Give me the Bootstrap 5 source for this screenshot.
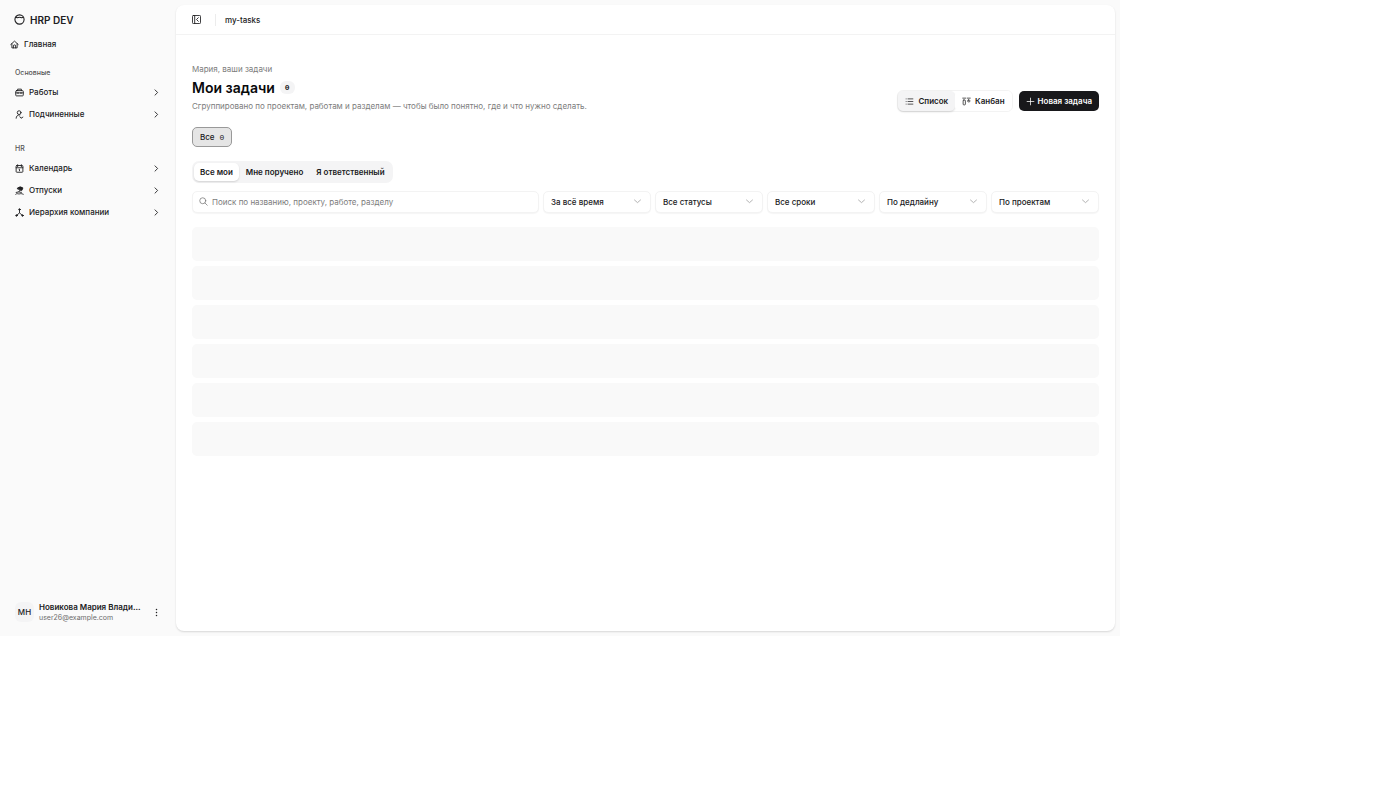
<!DOCTYPE html>
<html lang="ru">
<head>
<meta charset="utf-8">
<meta name="viewport" content="width=device-width, initial-scale=1">
<title>Мои задачи</title>
<link href="https://cdn.jsdelivr.net/npm/bootstrap@5.3.0/dist/css/bootstrap.min.css" rel="stylesheet">
<style>
:root{--ink:#202022;--muted:#7c7c7c;--line:#f3f3f3;--soft:#f4f4f5;--shell:#fafafa}
body{font-family:Inter,"Liberation Sans",sans-serif;font-size:8px;line-height:12px;color:var(--ink);background:#fff}
svg{fill:none;stroke:currentColor;stroke-width:2;stroke-linecap:round;stroke-linejoin:round;flex:none;width:9px;height:9px}
a{color:inherit;text-decoration:none}
button{font:inherit;color:inherit;white-space:nowrap}
.shell{width:80%;height:80vh;background:var(--shell)}
.side{width:176px;padding:7px 8px 13px}
.side-brand{height:25px;padding:0 6px;gap:5px;font-size:10px;font-weight:600}
.side-brand svg{width:11px;height:11px;stroke-width:2.4}
.side-link{height:22px;gap:5px;padding:0 7px;background:none;border:0;width:100%;font-weight:500}
.side-link svg{stroke-width:2.4}
.side-link.home{padding:0 2px;height:24px}
.side-label{height:17px;margin-top:8px;padding:1px 7px 0;font-size:7px;color:#555;font-weight:500}
.side-link + .side-label.second{margin-top:15px}
.avatar{width:19px;height:20px;border-radius:6px;background:var(--soft)}
.user-name{font-weight:600;line-height:11px}
.user-mail{font-size:7px;line-height:10px;color:#6c6c6c;font-weight:400}
.panel{margin:5px 5px 5px 0;border-radius:8px;background:#fff;box-shadow:0 1px 2px rgba(0,0,0,.14);min-width:0}
.top-bar{height:30px;padding:0 16px;border-bottom:1px solid var(--line);font-weight:500}
.rule{width:1px;height:12px;background:#ececec;margin:0 9px 0 14px}
.content{padding:28px 16px 16px}
.muted{color:var(--muted)}
.title-row{height:25px;gap:5px}
.title{font-size:14px;line-height:20px;font-weight:600;margin:0;color:#09090b}
.count{font-family:"Liberation Mono",monospace;font-size:8px;line-height:13px}
.count-pill{background:var(--soft);border-radius:6px;padding:0 5px;font-weight:700}
.actions{gap:6px}
.seg{border:1px solid var(--line);border-radius:6px}
.seg button{height:20px;gap:4px;padding:0 7px;border:0;background:#fff;border-radius:5px;font-weight:600}
.seg button.on{background:var(--soft);box-shadow:0 1px 2px rgba(0,0,0,.15)}
.add{height:20px;padding:0 7px;gap:3px;border:0;border-radius:5px;background:var(--ink);background:#18181b;color:#fff;font-weight:600}
.chip{height:20px;padding:0 7px;gap:5px;border:1px solid #999;border-radius:5px;background:#e5e5e5;font-weight:500;margin-top:15px}
.tabs{background:var(--soft);border-radius:7px;padding:2px;margin-top:14px;gap:1px}
.tabs button{height:18px;border:0;background:none;border-radius:5px;padding:0 6px;font-weight:600}
.tabs button.on{background:#fff;box-shadow:0 1px 2px rgba(0,0,0,.14)}
.filters{display:grid;grid-template-columns:minmax(0,1fr) repeat(5,108px);gap:4px;margin-top:8px}
.field{height:22px;border:1px solid var(--line);border-radius:5px;background:#fff;box-shadow:0 1px 1px rgba(0,0,0,.04);position:relative}
.field input,.field select{display:block;width:100%;height:20px;border:0;background:none;outline:0;padding:0 7px;font:inherit;color:inherit;appearance:none;border-radius:5px}
.field select{font-weight:500}
.field input{padding-left:19px}
.field input::placeholder{color:var(--muted);opacity:1}
.field svg{position:absolute;top:5px;color:#777;pointer-events:none}
.field .lens{left:6px}
.field .chev{right:8px;color:#999}
.rows{gap:5px;margin-top:14px}
.bone{height:34px;border-radius:5px;background:#f9f9f9}
</style>
</head>
<body>
<div class="shell d-flex">
  <aside class="side d-flex flex-column flex-shrink-0">
    <a href="#" class="side-brand d-flex align-items-center"><svg viewBox="0 0 24 24"><circle cx="12" cy="12" r="10"/><path d="M4 7l3 1q5-2 10 0l3-1"/></svg>HRP DEV</a>
    <nav class="d-flex flex-column">
      <a href="#" class="side-link home d-flex align-items-center"><svg viewBox="0 0 24 24"><path d="M2 12l10-9 10 9M5 10v11h14V10M9 21v-5a3 3 0 0 1 6 0v5"/></svg>Главная</a>
      <div class="side-label d-flex align-items-center">Основные</div>
      <button class="side-link d-flex align-items-center"><svg viewBox="0 0 24 24"><rect x="2" y="7" width="20" height="14" rx="2"/><path d="M7 7V3h10v4M2 13h20M8 12v3M16 12v3"/></svg>Работы<svg class="ms-auto" viewBox="0 0 24 24"><path d="M8 5l7 7-7 7"/></svg></button>
      <button class="side-link d-flex align-items-center"><svg viewBox="0 0 24 24"><circle cx="11" cy="7" r="5"/><path d="M3 22c0-6 4-9 10-9M13 18l3 4 5-3"/></svg>Подчиненные<svg class="ms-auto" viewBox="0 0 24 24"><path d="M8 5l7 7-7 7"/></svg></button>
      <div class="side-label second d-flex align-items-center">HR</div>
      <button class="side-link d-flex align-items-center"><svg viewBox="0 0 24 24"><rect x="3" y="4" width="18" height="18" rx="2"/><path d="M7 2v5M17 2v5M3 10h18M11 14h1v4"/></svg>Календарь<svg class="ms-auto" viewBox="0 0 24 24"><path d="M8 5l7 7-7 7"/></svg></button>
      <button class="side-link d-flex align-items-center"><svg viewBox="0 0 24 24"><path d="M6 6q8-7 15-1-1 5-3 7z" fill="currentColor"/><path d="M14 8q-1 6-4 8M2 22c4-4 6 0 10-1s5-1 10 1M3 17q7-3 14 0"/></svg>Отпуски<svg class="ms-auto" viewBox="0 0 24 24"><path d="M8 5l7 7-7 7"/></svg></button>
      <button class="side-link d-flex align-items-center"><svg viewBox="0 0 24 24"><g fill="currentColor"><circle cx="12" cy="4" r="2"/><circle cx="4" cy="20" r="2"/><circle cx="20" cy="20" r="2"/></g><path d="M12 4v9l-8 7M12 13l8 7"/></svg>Иерархия компании<svg class="ms-auto" viewBox="0 0 24 24"><path d="M8 5l7 7-7 7"/></svg></button>
    </nav>
    <button class="side-link d-flex align-items-center mt-auto text-start"><span class="avatar d-flex align-items-center justify-content-center">МН</span><span><span class="user-name d-block">Новикова Мария Влади...</span><span class="user-mail d-block">user26@example.com</span></span><svg class="ms-auto" viewBox="0 0 24 24"><path d="M12 4v.1M12 12v.1M12 20v.1" stroke-width="4"/></svg></button>
  </aside>
  <main class="panel flex-fill">
    <header class="top-bar d-flex align-items-center"><button class="border-0 bg-transparent p-0 d-flex" aria-label="Меню"><svg viewBox="2 2 20 20"><rect x="3" y="3" width="18" height="18" rx="2"/><path d="M8 3v18M16 8l-4 4 4 4"/></svg></button><span class="rule"></span>my-tasks</header>
    <div class="content">
      <div class="d-flex align-items-end justify-content-between">
        <div>
          <div class="muted">Мария, ваши задачи</div>
          <div class="title-row d-flex align-items-center"><h1 class="title">Мои задачи</h1><span class="count count-pill">0</span></div>
          <div class="muted">Сгруппировано по проектам, работам и разделам — чтобы было понятно, где и что нужно сделать.</div>
        </div>
        <div class="actions d-flex align-items-center">
          <div class="seg d-flex"><button class="on d-flex align-items-center"><svg viewBox="0 0 24 24"><path d="M8 5h13M8 12h13M8 19h13M3 5h.1M3 12h.1M3 19h.1"/></svg>Список</button><button class="d-flex align-items-center"><svg viewBox="0 0 24 24"><path d="M2 3h8M14 3h8"/><rect x="3" y="8" width="6" height="13" rx="2"/><rect x="15" y="8" width="6" height="5" rx="2"/></svg>Канбан</button></div>
          <button class="add d-flex align-items-center"><svg viewBox="0 0 24 24"><path d="M12 3v18M3 12h18"/></svg>Новая задача</button>
        </div>
      </div>
      <button class="chip d-flex align-items-center">Все <span class="count">0</span></button>
      <div class="d-flex"><div class="tabs d-flex"><button class="on">Все мои</button><button>Мне поручено</button><button>Я ответственный</button></div></div>
      <div class="filters">
        <div class="field"><svg class="lens" viewBox="0 0 24 24"><circle cx="10" cy="10" r="8"/><path d="M16 16l6 6"/></svg><input type="text" aria-label="Поиск" placeholder="Поиск по названию, проекту, работе, разделу"></div>
        <div class="field"><select aria-label="Период"><option>За всё время</option></select><svg class="chev" viewBox="0 0 24 24"><path d="M4 8l8 7 8-7"/></svg></div>
        <div class="field"><select aria-label="Статус"><option>Все статусы</option></select><svg class="chev" viewBox="0 0 24 24"><path d="M4 8l8 7 8-7"/></svg></div>
        <div class="field"><select aria-label="Срок"><option>Все сроки</option></select><svg class="chev" viewBox="0 0 24 24"><path d="M4 8l8 7 8-7"/></svg></div>
        <div class="field"><select aria-label="Сортировка"><option>По дедлайну</option></select><svg class="chev" viewBox="0 0 24 24"><path d="M4 8l8 7 8-7"/></svg></div>
        <div class="field"><select aria-label="Группировка"><option>По проектам</option></select><svg class="chev" viewBox="0 0 24 24"><path d="M4 8l8 7 8-7"/></svg></div>
      </div>
      <div class="rows d-flex flex-column"><div class="bone"></div><div class="bone"></div><div class="bone"></div><div class="bone"></div><div class="bone"></div><div class="bone"></div></div>
    </div>
  </main>
</div>
<script src="https://cdn.jsdelivr.net/npm/bootstrap@5.3.0/dist/js/bootstrap.bundle.min.js"></script>
</body>
</html>
